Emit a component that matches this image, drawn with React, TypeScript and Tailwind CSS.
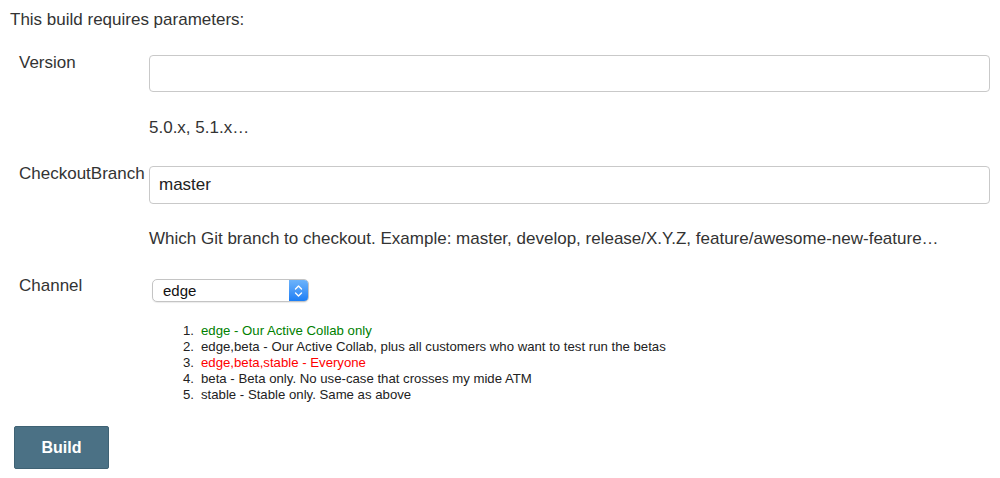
import React from 'react';

const items: { text: string; color: string }[] = [
  { text: 'edge - Our Active Collab only', color: 'text-[#008000]' },
  { text: 'edge,beta - Our Active Collab, plus all customers who want to test run the betas', color: 'text-[#222]' },
  { text: 'edge,beta,stable - Everyone', color: 'text-[#ff0000]' },
  { text: 'beta - Beta only. No use-case that crosses my mide ATM', color: 'text-[#222]' },
  { text: 'stable - Stable only. Same as above', color: 'text-[#222]' },
];

const Stepper = () => (
  <div className="w-[19px] h-full rounded-r-[4px] bg-gradient-to-b from-[#6cb3fa] to-[#1a7ef5] flex items-center justify-center">
    <svg width="9" height="14" viewBox="0 0 9 14" fill="none" stroke="white" strokeWidth="1.4" strokeLinecap="round" strokeLinejoin="round">
      <path d="M1.5 5 L4.5 2 L7.5 5" />
      <path d="M1.5 9 L4.5 12 L7.5 9" />
    </svg>
  </div>
);

export default function App() {
  return (
    <div className="w-[1000px] h-[478px] bg-white text-[#333] font-['Liberation_Sans',Arial,sans-serif] overflow-hidden">
      <div className="pt-[10px] pl-[10px] text-[17px] leading-[20px]">This build requires parameters:</div>

      <div className="pl-[19px] pr-[10px] mt-[25px]">
        {/* Version */}
        <div className="flex">
          <div className="w-[130px] text-[17px] leading-[20px] -mt-[2px]">Version</div>
          <input
            className="flex-1 h-[37px] border border-[#c9c9c9] rounded-[4px] px-[8px] text-[17px] outline-none"
            defaultValue=""
          />
        </div>
        <div className="ml-[130px] mt-[26px] text-[17px] leading-[20px]">5.0.x, 5.1.x…</div>

        {/* CheckoutBranch */}
        <div className="flex mt-[28px]">
          <div className="w-[130px] text-[17px] leading-[20px] -mt-[2px] whitespace-nowrap">CheckoutBranch</div>
          <input
            className="flex-1 h-[38px] border border-[#c9c9c9] rounded-[4px] px-[9px] text-[17px] text-[#222] outline-none"
            defaultValue="master"
          />
        </div>
        <div className="ml-[130px] mt-[25px] text-[17px] leading-[20px] whitespace-nowrap">
          Which Git branch to checkout. Example: master, develop, release/X.Y.Z, feature/awesome-new-feature…
        </div>

        {/* Channel */}
        <div className="flex mt-[30px]">
          <div className="w-[133px] text-[17px] leading-[20px] -mt-[3px]">Channel</div>
          <div className="w-[157px] h-[23px] flex border border-[#c4c4c4] rounded-[5px] bg-white shadow-[0_1px_1px_rgba(0,0,0,0.08)]">
            <div className="flex-1 pl-[10px] text-[15px] leading-[21px] text-[#111]">edge</div>
            <Stepper />
          </div>
        </div>

        <ol className="ml-[164px] mt-[21px] text-[13.2px] leading-[16px]">
          {items.map((it, i) => (
            <li key={i} className="flex">
              <span className="w-[18px] text-[#222]">{i + 1}.</span>
              <span className={it.color}>{it.text}</span>
            </li>
          ))}
        </ol>
      </div>

      <div className="pl-[14px] mt-[23px]">
        <button className="w-[95px] h-[43px] bg-[#4b7185] border border-[#3f6274] rounded-[2px] text-white font-bold text-[16px]">
          Build
        </button>
      </div>
    </div>
  );
}
